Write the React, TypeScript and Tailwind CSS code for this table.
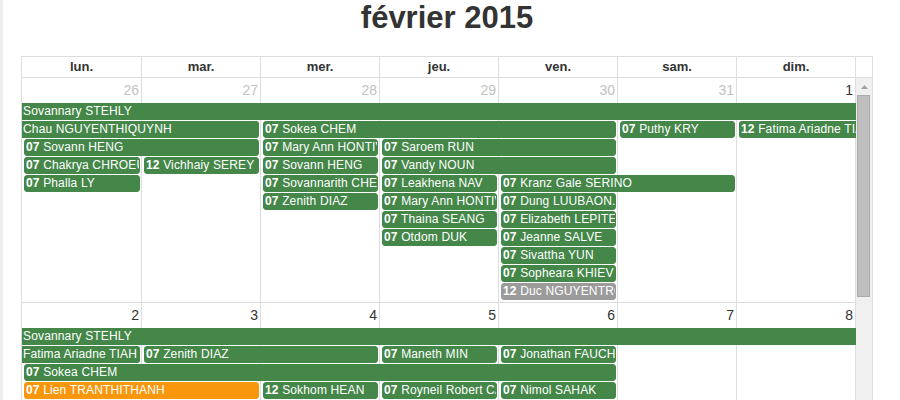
type Ev = {
  c: number;
  s: number;
  r: number;
  n: string;
  t?: string;
  ns?: boolean;
  ne?: boolean;
  tone?: "green" | "orange" | "gray";
};

const COL_START = ["col-start-1", "col-start-2", "col-start-3", "col-start-4", "col-start-5", "col-start-6", "col-start-7"];
const COL_SPAN = ["", "col-span-1", "col-span-2", "col-span-3", "col-span-4", "col-span-5", "col-span-6", "col-span-7"];
const ROW_START = [
  "row-start-2", "row-start-3", "row-start-4", "row-start-5", "row-start-6", "row-start-7",
  "row-start-8", "row-start-9", "row-start-10", "row-start-11", "row-start-12",
];

const TONES: Record<string, string> = {
  green: "bg-[#448749] border-[#448749]",
  orange: "bg-[#f8960c] border-[#f8960c]",
  gray: "bg-[#9b9b9b] border-[#9b9b9b]",
};

const DAYS = ["lun.", "mar.", "mer.", "jeu.", "ven.", "sam.", "dim."];

const WEEKS: { days: { d: number; other?: boolean }[]; events: Ev[] }[] = [
  {
    days: [
      { d: 26, other: true },
      { d: 27, other: true },
      { d: 28, other: true },
      { d: 29, other: true },
      { d: 30, other: true },
      { d: 31, other: true },
      { d: 1 },
    ],
    events: [
      { c: 0, s: 7, r: 0, n: "Sovannary STEHLY", ns: true, ne: true },
      { c: 0, s: 2, r: 1, n: "Chau NGUYENTHIQUYNH", ns: true },
      { c: 2, s: 3, r: 1, t: "07", n: "Sokea CHEM" },
      { c: 5, s: 1, r: 1, t: "07", n: "Puthy KRY" },
      { c: 6, s: 1, r: 1, t: "12", n: "Fatima Ariadne TIAH", ne: true },
      { c: 0, s: 2, r: 2, t: "07", n: "Sovann HENG" },
      { c: 2, s: 1, r: 2, t: "07", n: "Mary Ann HONTIVEROS" },
      { c: 3, s: 2, r: 2, t: "07", n: "Saroem RUN" },
      { c: 0, s: 1, r: 3, t: "07", n: "Chakrya CHROEUNG" },
      { c: 1, s: 1, r: 3, t: "12", n: "Vichhaiy SEREY" },
      { c: 2, s: 1, r: 3, t: "07", n: "Sovann HENG" },
      { c: 3, s: 2, r: 3, t: "07", n: "Vandy NOUN" },
      { c: 0, s: 1, r: 4, t: "07", n: "Phalla LY" },
      { c: 2, s: 1, r: 4, t: "07", n: "Sovannarith CHEA" },
      { c: 3, s: 1, r: 4, t: "07", n: "Leakhena NAV" },
      { c: 4, s: 2, r: 4, t: "07", n: "Kranz Gale SERINO" },
      { c: 2, s: 1, r: 5, t: "07", n: "Zenith DIAZ" },
      { c: 3, s: 1, r: 5, t: "07", n: "Mary Ann HONTIVEROS" },
      { c: 4, s: 1, r: 5, t: "07", n: "Dung LUUBAON." },
      { c: 3, s: 1, r: 6, t: "07", n: "Thaina SEANG" },
      { c: 4, s: 1, r: 6, t: "07", n: "Elizabeth LEPITEN" },
      { c: 3, s: 1, r: 7, t: "07", n: "Otdom DUK" },
      { c: 4, s: 1, r: 7, t: "07", n: "Jeanne SALVE" },
      { c: 4, s: 1, r: 8, t: "07", n: "Sivattha YUN" },
      { c: 4, s: 1, r: 9, t: "07", n: "Sopheara KHIEV" },
      { c: 4, s: 1, r: 10, t: "12", n: "Duc NGUYENTRONG", tone: "gray" },
    ],
  },
  {
    days: [{ d: 2 }, { d: 3 }, { d: 4 }, { d: 5 }, { d: 6 }, { d: 7 }, { d: 8 }],
    events: [
      { c: 0, s: 7, r: 0, n: "Sovannary STEHLY", ns: true, ne: true },
      { c: 0, s: 1, r: 1, n: "Fatima Ariadne TIAH", ns: true },
      { c: 1, s: 2, r: 1, t: "07", n: "Zenith DIAZ" },
      { c: 3, s: 1, r: 1, t: "07", n: "Maneth MIN" },
      { c: 4, s: 1, r: 1, t: "07", n: "Jonathan FAUCHER" },
      { c: 0, s: 5, r: 2, t: "07", n: "Sokea CHEM" },
      { c: 0, s: 2, r: 3, t: "07", n: "Lien TRANTHITHANH", tone: "orange" },
      { c: 2, s: 1, r: 3, t: "12", n: "Sokhom HEAN" },
      { c: 3, s: 1, r: 3, t: "07", n: "Royneil Robert CABRERA" },
      { c: 4, s: 1, r: 3, t: "07", n: "Nimol SAHAK" },
    ],
  },
];

function Event({ e }: { e: Ev }) {
  const edge = [
    e.ns ? "ml-0 border-l-0 rounded-l-none" : "ml-[2px]",
    e.ne ? "mr-0 border-r-0 rounded-r-none" : "mr-[2px]",
  ].join(" ");
  return (
    <div
      className={`${COL_START[e.c]} ${COL_SPAN[e.s]} ${ROW_START[e.r]} mt-[1px] h-[17px] min-w-0 overflow-hidden whitespace-nowrap rounded-[3px] border pl-[1px] text-[12px] leading-[15px] tracking-[0.15px] text-white ${edge} ${TONES[e.tone ?? "green"]}`}
    >
      {e.t && <span className="font-bold">{e.t}</span>}
      {e.t ? " " : ""}
      {e.n}
    </div>
  );
}

export default function App() {
  return (
    <div className="flex h-[400px] w-[900px] overflow-hidden bg-white font-['Liberation_Sans',Arial,sans-serif] text-[#333]">
      <div className="w-[3px] shrink-0 bg-[#ededed]" />
      <div className="ml-[18px] w-[852px] shrink-0">
        {/* Title */}
        <div className="h-[56px] text-center text-[31px] font-bold leading-[36px]">février 2015</div>

        <div className="border border-[#ddd]">
          {/* Day names */}
          <div className="grid grid-cols-[120px_repeat(6,119px)_16px] border-b border-[#ddd]">
            {DAYS.map((d) => (
              <div key={d} className="h-[20px] border-r border-[#ddd] text-center text-[13px] font-bold leading-[20px]">
                {d}
              </div>
            ))}
            <div />
          </div>

          {/* Body */}
          <div className="flex">
            <div className="w-[834px] shrink-0">
              {WEEKS.map((w, wi) => (
                <div
                  key={wi}
                  className="grid grid-cols-[120px_repeat(6,119px)] grid-rows-[24px_repeat(11,18px)_2px] border-b border-[#ddd]"
                >
                  {w.days.map((d, i) => (
                    <div
                      key={i}
                      className={`${COL_START[i]} row-span-full border-r border-[#ddd] pr-[2px] pt-[2px] text-right text-[14px] leading-[20px] ${d.other ? "text-[#c2c2c2]" : "text-[#333]"}`}
                    >
                      {d.d}
                    </div>
                  ))}
                  {w.events.map((e, i) => (
                    <Event key={i} e={e} />
                  ))}
                </div>
              ))}
            </div>

            {/* Scrollbar */}
            <div className="w-[16px] shrink-0 bg-[#f0f0f0]">
              <div className="flex h-[17px] items-center justify-center">
                <svg width="7" height="4" viewBox="0 0 7 4">
                  <path d="M3.5 0 L7 4 L0 4 Z" fill="#a3a3a3" />
                </svg>
              </div>
              <div className="ml-[1px] h-[202px] w-[13px] border border-[#aaaaaa] bg-[#bfbfbf]" />
            </div>
          </div>
        </div>
      </div>
    </div>
  );
}
